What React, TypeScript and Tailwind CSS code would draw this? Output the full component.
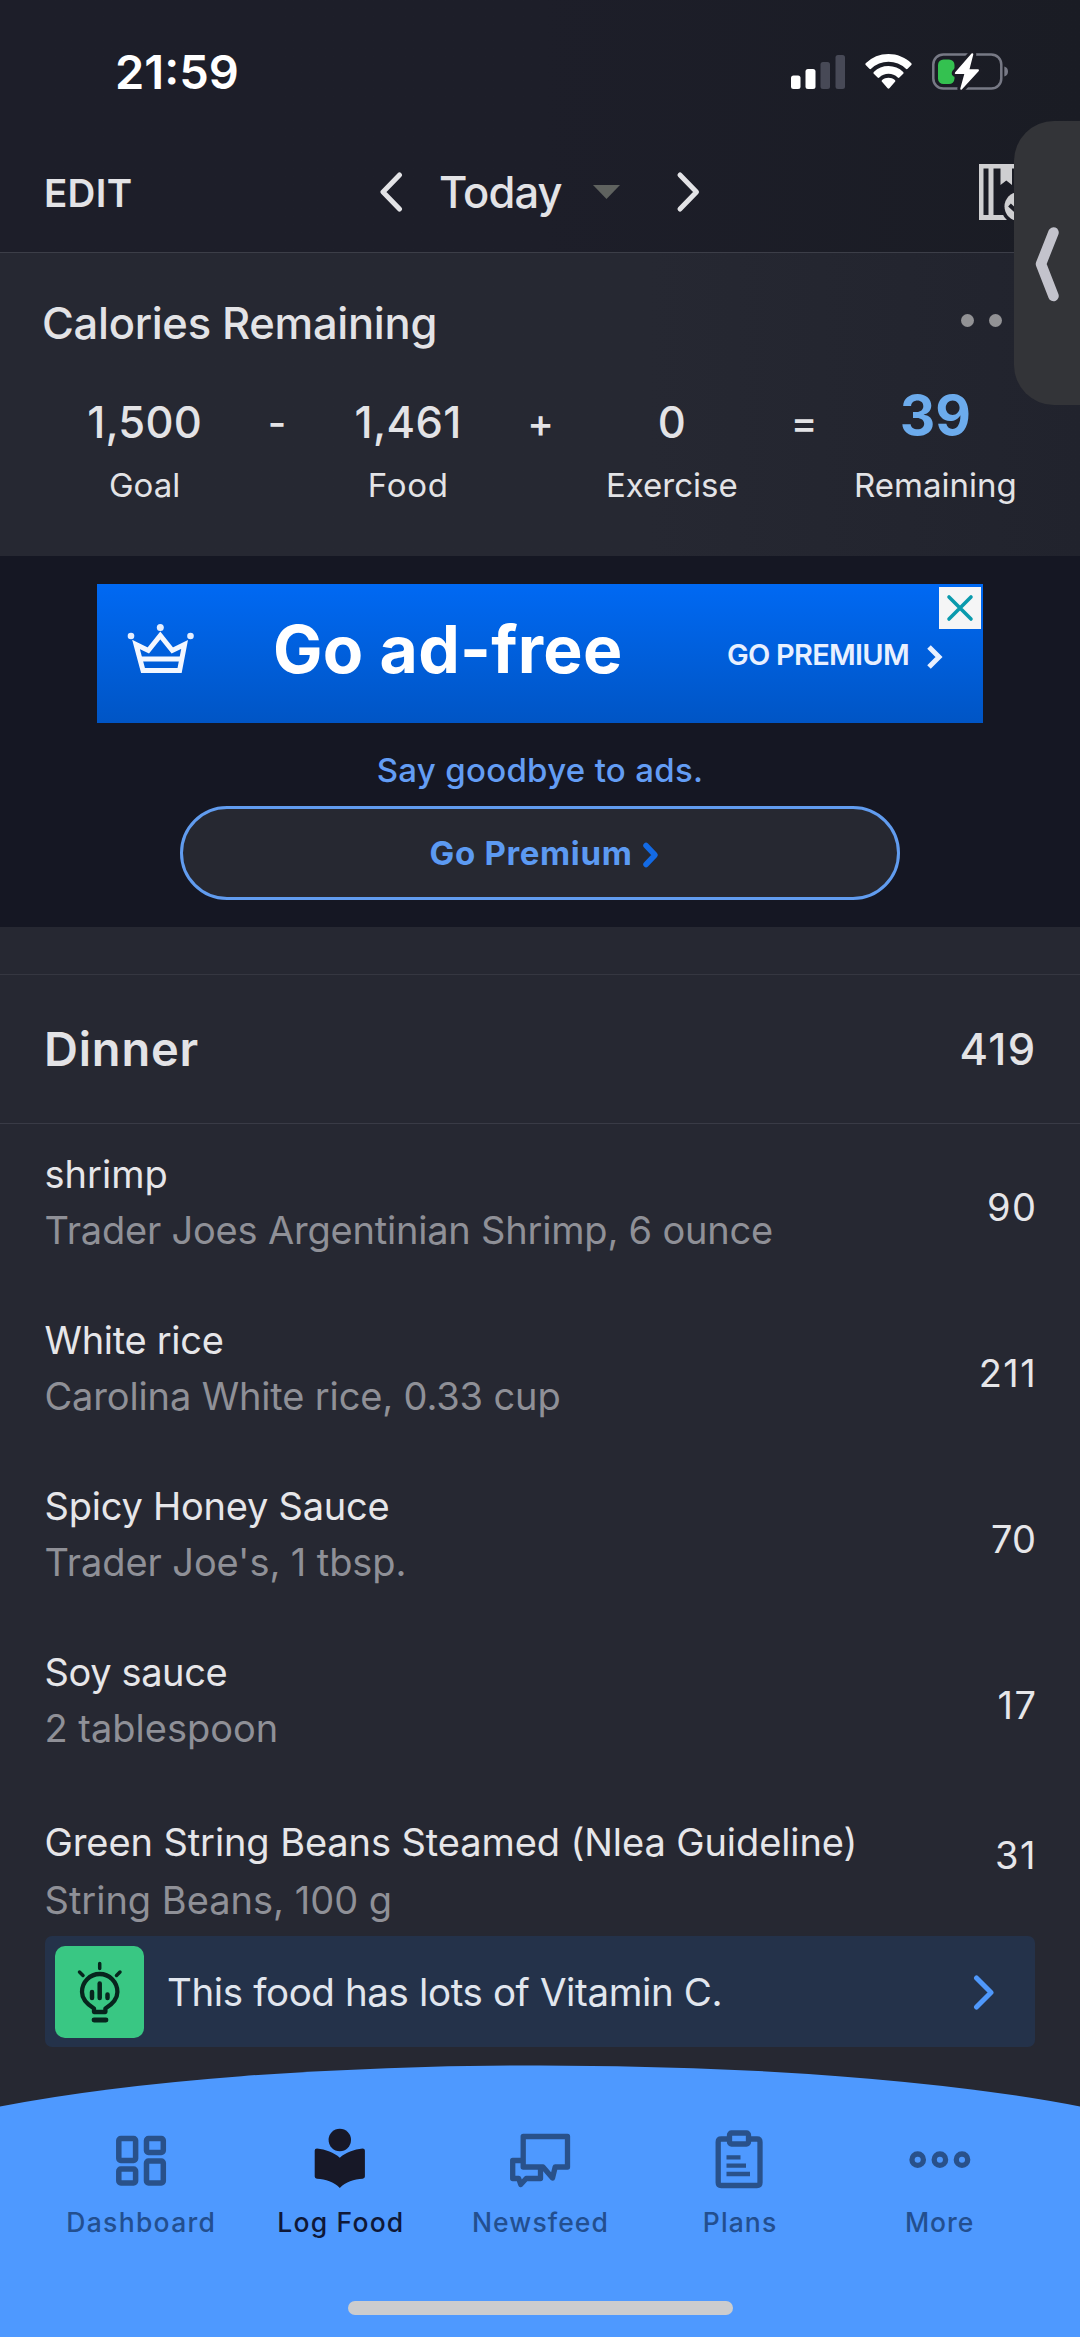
import React from "react";

const foods = [
  { name: "shrimp", detail: "Trader Joes Argentinian Shrimp, 6 ounce", kcal: "90", nameLs: "", detailLs: "tracking-[-0.2px]", kcalLs: "tracking-[1.4px] -mr-[1.4px]" },
  { name: "White rice", detail: "Carolina White rice, 0.33 cup", kcal: "211", nameLs: "tracking-[-0.3px]", detailLs: "tracking-[-0.14px]", kcalLs: "tracking-[1.4px] -mr-[1px]" },
  { name: "Spicy Honey Sauce", detail: "Trader Joe's, 1 tbsp.", kcal: "70", nameLs: "tracking-[-0.23px]", detailLs: "tracking-[-0.09px]", kcalLs: "" },
  { name: "Soy sauce", detail: "2 tablespoon", kcal: "17", nameLs: "tracking-[-0.38px]", detailLs: "", kcalLs: "tracking-[1.5px] -mr-[1.5px]" },
];

function SignalIcon() {
  return (
    <svg className="h-[40px] w-[56px]" viewBox="790 52 56 40">
      <rect x="790" y="75.500" width="9.500" height="13.500" rx="2.500" fill="#fff" />
      <rect x="804.500" y="69" width="10" height="20" rx="2.500" fill="#fff" />
      <rect x="819.500" y="62" width="9.500" height="27" rx="2.500" fill="#474956" />
      <rect x="834.500" y="55" width="9.500" height="34" rx="2.500" fill="#474956" />
    </svg>
  );
}

function WifiIcon() {
  return (
    <svg className="ml-[17px] h-[40px] w-[50px]" viewBox="863 52 50 40" fill="#fff">
      <path d="M887.500 54c8.600 0 16.700 3.300 22.800 9.200.5.500.5 1.300 0 1.800l-3.700 3.800c-.5.500-1.200.5-1.700 0a25 25 0 0 0-34.800 0c-.5.500-1.200.5-1.700 0l-3.700-3.800c-.5-.5-.5-1.300 0-1.800A32.800 32.800 0 0 1 887.500 54Z" />
      <path d="M887.500 66c5.500 0 10.700 2.100 14.700 5.900.5.500.5 1.300 0 1.800l-3.800 3.800c-.5.500-1.200.5-1.700 0a13.300 13.300 0 0 0-18.400 0c-.5.500-1.200.5-1.700 0l-3.800-3.800c-.5-.5-.5-1.300 0-1.800A21.300 21.300 0 0 1 887.500 66Z" />
      <path d="M887.500 77.700c2.400 0 4.600.8 6.400 2.300.6.500.6 1.300.1 1.800l-5.600 6.400c-.5.600-1.300.6-1.800 0l-5.600-6.400c-.5-.5-.5-1.300.1-1.800 1.800-1.500 4-2.300 6.400-2.300Z" />
    </svg>
  );
}

function BatteryIcon() {
  return (
    <svg className="ml-[16px] h-[42px] w-[80px]" viewBox="929 51 80 42">
      <rect x="932.300" y="54.500" width="68" height="34" rx="10" fill="none" stroke="#777985" strokeWidth="2.500" />
      <path d="M1003.300 66.500q3.700 1.200 3.700 5t-3.700 5Z" fill="#777985" />
      <rect x="937" y="59.500" width="16.500" height="24.500" rx="5.500" fill="#34c150" />
      <path d="M970.500 53.500 954 72.500q-.8 1.500.8 1.500h8.500l-4 14.500q0 2 1.500 1l17-18.500q.8-1.700-.8-1.700h-8.500l3.800-14.800q0-2-1.800-1Z" fill="#fff" stroke="#1c1d26" strokeWidth="6" strokeLinejoin="round" paintOrder="stroke" />
    </svg>
  );
}

function DiaryIcon() {
  return (
    <svg className="ml-[279px] h-[56px] w-[60px] shrink-0" viewBox="977 162 60 56">
      <path d="M977 162h50v56h-50ZM981.500 166.500v46.500h5v-46.500ZM991.500 166.500v46.500h31v-46.500Z" fill="#cfcfd1" fillRule="evenodd" />
      <path d="M998.500 164h11.500v19l-5.700-4.500-5.800 4.500Z" fill="#cfcfd1" />
      <circle cx="1017" cy="204.500" r="18" fill="#1b1c25" />
      <circle cx="1017" cy="204.500" r="14.500" fill="#cfcfd1" />
      <path d="m1007.500 203 7.500 7 10-11" fill="none" stroke="#1b1c25" strokeWidth="4" />
    </svg>
  );
}

function CrownIcon() {
  return (
    <svg className="ml-[27px] h-[54px] w-[74px] shrink-0" viewBox="124 623 74 54" fill="none" stroke="#f3f7ff" strokeWidth="5" strokeLinejoin="miter">
      <path d="m136 645.500 12.300 6 12-15 12 15 12.300-6-5 26h-36.600Z" />
      <path d="M140 660h41" />
      <g fill="#e4eeff" stroke="none">
        <circle cx="131" cy="637" r="3.300" />
        <circle cx="160.300" cy="628.500" r="3.500" />
        <circle cx="190.500" cy="637" r="3.300" />
      </g>
    </svg>
  );
}

function BulbIcon() {
  return (
    <svg className="h-[66px] w-[50px]" viewBox="75 1957 50 66" fill="none" stroke="#07251d" strokeLinecap="round" strokeLinejoin="round">
      <path d="M94 2010v-3.500c-4-2.500-12-7.500-12-16.500a17.700 18 0 0 1 35.400 0c0 9-8 14-12 16.500v3.500Z" strokeWidth="4.300" />
      <path d="M94 2018h12" strokeWidth="4.800" />
      <path d="M92 1990v6M107.500 1992.500v3.500" strokeWidth="4.500" />
      <path d="M99.700 1981.500v14.500" strokeWidth="4.500" />
      <path d="M99.700 1961.500v5M79.500 1970l3.500 3.500M120 1970l-3.500 3.500" strokeWidth="3.500" />
    </svg>
  );
}

function DashboardIcon() {
  return (
    <svg className="h-[64px] w-[64px]" viewBox="109 2128 64 64" fill="none" stroke="#29518a" strokeWidth="5.500">
      <rect x="118.800" y="2138.500" width="16.800" height="22" rx="2" />
      <rect x="118.800" y="2169" width="16.800" height="14" rx="2" />
      <rect x="146.500" y="2138.500" width="16.800" height="14" rx="2" />
      <rect x="146.500" y="2161" width="16.800" height="22" rx="2" />
    </svg>
  );
}

function LogFoodIcon() {
  return (
    <svg className="h-[64px] w-[64px]" viewBox="308 2128 64 64" fill="#171827">
      <circle cx="339.800" cy="2140" r="11.200" />
      <path d="M317 2148.500c8.500.8 17 4 22.800 9.200 5.800-5.200 14.300-8.400 22.800-9.200q2.300 0 2.300 2v26q0 2-2.300 2.300c-8.500.3-17 3.200-22.800 9.200-5.800-6-14.300-8.900-22.800-9.200q-2.300-.3-2.300-2.300v-26q0-2 2.300-2Z" />
    </svg>
  );
}

function NewsfeedIcon() {
  return (
    <svg className="h-[64px] w-[64px]" viewBox="507 2128 64 64" fill="none" stroke="#29518a" strokeWidth="5.300" strokeLinejoin="round">
      <path d="M522.200 2136.500h44.300v30.500h-12.300l-2.700 11-9.500-11h-19.800Z" />
      <path d="M520 2160.500h-8.300v18h6l2 6 5.500-6h14.300v-10" />
    </svg>
  );
}

function PlansIcon() {
  return (
    <svg className="h-[64px] w-[64px]" viewBox="707 2128 64 64" fill="none" stroke="#29518a" strokeWidth="5.300">
      <path d="M727 2139h-6.800q-3 0-3 3v40.500q0 3 3 3h35.800q3 0 3-3v-40.500q0-3-3-3h-6.800" />
      <rect x="728.500" y="2133" width="19" height="11" rx="2" />
      <path d="M725.500 2157.300h14M725.500 2165.700h19.500M725.500 2174h23.500" strokeWidth="4.300" />
    </svg>
  );
}

function MoreIcon() {
  return (
    <svg className="h-[64px] w-[64px]" viewBox="906 2128 64 64" fill="none" stroke="#29518a" strokeWidth="5.300">
      <circle cx="916.700" cy="2159.700" r="5.700" />
      <circle cx="938.900" cy="2159.700" r="5.700" />
      <circle cx="961" cy="2159.700" r="5.700" />
    </svg>
  );
}

function Op({ children }: { children: React.ReactNode }) {
  return <div className="flex h-[60px] w-0 flex-1 items-center justify-center pt-px pl-px text-[40px]">{children}</div>;
}

function Stat({ value, label, labelLs = "" }: { value: React.ReactNode; label: string; labelLs?: string }) {
  return (
    <div className="flex w-0 flex-1 flex-col items-center whitespace-nowrap">
      <div className="h-[60px] leading-[60px]">{value}</div>
      <div className={`mt-[11px] h-[44px] text-[33px] leading-[44px] font-normal ${labelLs}`}>{label}</div>
    </div>
  );
}

function Tab({ icon, label, active = false, ls }: { icon: React.ReactNode; label: string; active?: boolean; ls: string }) {
  return (
    <div className={`flex w-0 flex-1 flex-col items-center ${active ? "text-[#0f1838]" : "text-[#234f8f]"}`}>
      {icon}
      <div className={`mt-[10px] h-[40px] pl-px text-[26.5px] leading-[40px] font-medium whitespace-nowrap ${ls}`}>{label}</div>
    </div>
  );
}

export default function App() {
  return (
    <div className="relative flex h-[2337px] w-[1080px] flex-col overflow-hidden bg-[#262832] font-['Inter','Liberation_Sans',sans-serif] text-[#e3e3e6]">
      {/* Status bar and date picker */}
      <header className="h-[253px] shrink-0 border-b border-[#3c3e48] bg-linear-to-r from-[#1d1e29] from-50% to-[#1a1c24]">
        <div className="flex h-[144px] items-center pr-[70px] pl-[115px]">
          <div className="flex-1 text-[47px] font-semibold text-white">21:59</div>
          <SignalIcon />
          <WifiIcon />
          <BatteryIcon />
        </div>
        <div className="flex h-[96px] items-center pl-[44px]">
          <div className="w-[336px] shrink-0 pt-[4px] text-[38.5px] font-[560] tracking-[0.3px]">EDIT</div>
          <svg className="h-[44px] w-[24px] shrink-0" viewBox="0 0 24 44" fill="none" stroke="#e3e3e6" strokeWidth="5" strokeLinecap="round" strokeLinejoin="round">
            <path d="M19.500 5 3 22l16.500 17" />
          </svg>
          <div className="ml-[35px] w-[154px] shrink-0 pt-px text-[43.5px] font-[450] tracking-[-0.9px]">Today</div>
          <svg className="h-[14px] w-[27px] shrink-0" viewBox="0 0 27 14" fill="#5f625f">
            <path d="M0 0h27L13.500 14Z" />
          </svg>
          <svg className="ml-[56px] h-[44px] w-[24px] shrink-0" viewBox="0 0 24 44" fill="none" stroke="#e3e3e6" strokeWidth="5" strokeLinecap="round" strokeLinejoin="round">
            <path d="M4 5 20.500 22 4 39" />
          </svg>
          <DiaryIcon />
        </div>
      </header>

      {/* Calories summary */}
      <section className="h-[303px] shrink-0 bg-linear-to-r from-[#262832] from-60% to-[#21232d] pt-[43px]">
        <div className="flex h-[56px] items-center pl-[42px]">
          <h1 className="w-[918.5px] text-[43.5px] font-[450] tracking-[-0.3px]">Calories Remaining</h1>
          <div className="-mt-[7px] flex gap-[15.5px]">
            <i className="size-[13px] rounded-full bg-[#929295]" />
            <i className="size-[13px] rounded-full bg-[#929295]" />
          </div>
        </div>
        <div className="mt-[40px] flex px-[79px] text-[43.5px] font-[450]">
          <Stat value={<span className="tracking-[0.2px]">1,500</span>} label="Goal" />
          <Op>-</Op>
          <Stat value={<span className="tracking-[0.4px]">1,461</span>} label="Food" labelLs="tracking-[0.7px]" />
          <Op>+</Op>
          <Stat value="0" label="Exercise" />
          <Op>=</Op>
          <Stat value={<span className="relative -top-[7px] text-[55px] font-bold text-[#6cabec]">39</span>} label="Remaining" />
        </div>
      </section>

      {/* Ad banner */}
      <section className="flex h-[371px] shrink-0 flex-col items-center bg-[#151723] pt-[28px]">
        <div className="relative flex h-[139px] w-[886px] items-center bg-linear-to-b from-[#0069f3] to-[#0055c5]">
          <div className="-mt-[10px] flex items-center">
            <CrownIcon />
            <div className="ml-[75px] w-[452px] shrink-0 text-[66px] leading-[76px] font-bold tracking-[0.3px] text-white">Go ad-free</div>
          </div>
          <div className="ml-[2px] w-[199px] shrink-0 pt-[2px] text-[29px] font-semibold tracking-[-0.74px] whitespace-nowrap text-[#e8f0ff]">GO PREMIUM</div>
          <svg className="mt-[7px] h-[26px] w-[18px] shrink-0" viewBox="0 0 18 26" fill="none" stroke="#e8f0ff" strokeWidth="5">
            <path d="m3 3 10 10L3 23" />
          </svg>
          <div className="absolute top-[3px] right-[2.5px] flex size-[42px] items-center justify-center bg-[#f5f5f6]">
            <svg className="size-[28px]" viewBox="0 0 28 28" stroke="#0a9aad" strokeWidth="3.600" strokeLinecap="round">
              <path d="m3 3 22 22M25 3 3 25" />
            </svg>
          </div>
        </div>
        <div className="mt-[25px] h-[44px] text-[33px] leading-[44px] font-[450] tracking-[0.3px] text-[#639df4]">Say goodbye to ads.</div>
        <div className="mt-[14px] flex h-[94px] w-[720px] items-center justify-center rounded-full border-[3px] border-[#619cef] bg-[#262831] pt-px pl-[10px]">
          <span className="text-[33px] font-bold tracking-[0.66px] text-[#5c9af2]">Go Premium</span>
          <svg className="mt-[3px] ml-[10px] h-[28px] w-[18px]" viewBox="0 0 18 28" fill="none" stroke="#136ae4" strokeWidth="5.500" strokeLinecap="round" strokeLinejoin="round">
            <path d="m4 4.500 9 9.500-9 9.500" />
          </svg>
        </div>
      </section>

      {/* Meal header */}
      <div className="h-[48px] shrink-0 border-b border-[#353741]" />
      <div className="flex h-[149px] shrink-0 items-center justify-between border-b border-[#393b46] pr-[45px] pl-[44px]">
        <h2 className="text-[47px] font-semibold tracking-[0.8px]">Dinner</h2>
        <span className="-mr-[1.5px] pt-[2px] text-[43.5px] font-[450] tracking-[1.4px]">419</span>
      </div>

      {/* Food entries */}
      {foods.map((f) => (
        <div key={f.name} className="flex h-[166px] shrink-0 items-center justify-between pr-[44px] pl-[44.5px] text-[38px]">
          <div className="pb-[10px] leading-[56px]">
            <div className={`text-[#e6e6e9] ${f.nameLs}`}>{f.name}</div>
            <div className={`text-[#8f9097] ${f.detailLs}`}>{f.detail}</div>
          </div>
          <div className={`text-[#e6e6e9] ${f.kcalLs}`}>{f.kcal}</div>
        </div>
      ))}
      <div className="flex h-[148px] shrink-0 justify-between pt-[26px] pr-[44px] pl-[44.5px] text-[38px] leading-[56px]">
        <div>
          <div className="tracking-[-0.09px] text-[#e6e6e9]">Green String Beans Steamed (Nlea Guideline)</div>
          <div className="mt-[2px] text-[#8f9097]">String Beans, 100 g</div>
        </div>
        <div className="-mr-[1px] pt-[13px] tracking-[1.5px] text-[#e6e6e9]">31</div>
      </div>

      {/* Nutrition insight */}
      <div className="mx-[45px] flex h-[111px] shrink-0 items-center rounded-[7px] bg-[#24324a] pr-[39px] pl-[10px]">
        <div className="flex h-[92px] w-[89px] items-center justify-center rounded-[10px] bg-[#39c783]">
          <BulbIcon />
        </div>
        <div className="ml-[23px] flex-1 pt-[2px] text-[38.5px] tracking-[-0.38px] text-[#e1e6ee]">This food has lots of Vitamin C.</div>
        <svg className="h-[36px] w-[24px]" viewBox="0 0 24 36" fill="none" stroke="#4f98fb" strokeWidth="5" strokeLinecap="round" strokeLinejoin="round">
          <path d="M4.500 4 19 18.500 4.500 33" />
        </svg>
      </div>

      {/* Bottom navigation */}
      <nav className="relative mt-[18px] h-[272px] shrink-0">
        <svg className="absolute inset-0 h-full w-full" viewBox="0 2065 1080 272" fill="#4e99ff">
          <path d="M0 2337V2106.500A700 113 0 0 1 1080 2106.500V2337Z" />
        </svg>
        <div className="relative flex px-[41px] pt-[63px]">
          <Tab icon={<DashboardIcon />} label="Dashboard" ls="tracking-[1.3px]" />
          <Tab icon={<LogFoodIcon />} label="Log Food" ls="tracking-[1.2px]" active />
          <Tab icon={<NewsfeedIcon />} label="Newsfeed" ls="tracking-[1.1px]" />
          <Tab icon={<PlansIcon />} label="Plans" ls="tracking-[1.1px]" />
          <Tab icon={<MoreIcon />} label="More" ls="tracking-[1px]" />
        </div>
        <div className="relative mx-auto mt-[59px] h-[14px] w-[385px] rounded-full bg-[#cbccce]" />
      </nav>

      {/* Floating side handle */}
      <div className="absolute top-[121px] right-0 flex h-[284px] w-[66px] items-center rounded-l-[40px] bg-[#333438] pl-[21px]">
        <svg className="h-[80px] w-[26px]" viewBox="0 0 26 80" fill="none" stroke="#c3c3cc" strokeWidth="10.500" strokeLinecap="round" strokeLinejoin="round">
          <path d="M18.500 9.500 6 41 18.500 73" />
        </svg>
      </div>
    </div>
  );
}
